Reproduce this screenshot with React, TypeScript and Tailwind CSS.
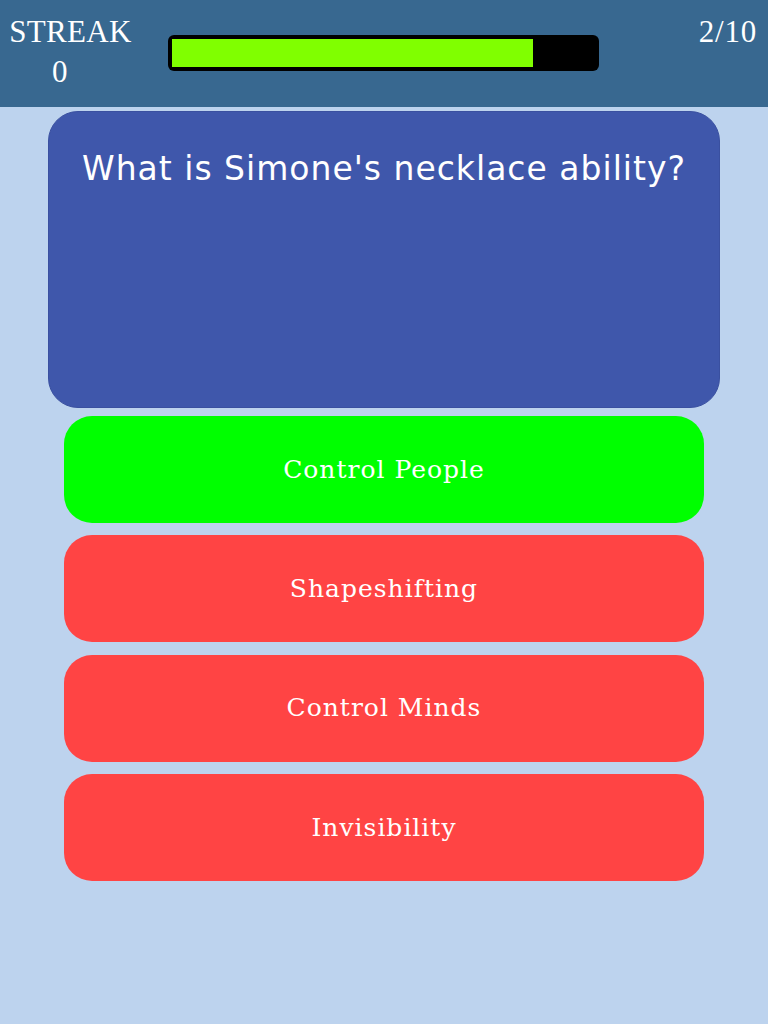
import React from "react";

const answers = [
  { text: "Control People", color: "bg-[#00ff00]" },
  { text: "Shapeshifting", color: "bg-[#ff4444]" },
  { text: "Control Minds", color: "bg-[#ff4444]" },
  { text: "Invisibility", color: "bg-[#ff4444]" },
];

export default function App() {
  return (
    <div className="w-[768px] h-[1024px] bg-[#bdd3ee] flex flex-col">
      <div className="h-[107px] bg-[#386890] flex items-start text-white" style={{ fontFamily: '"Liberation Serif", serif' }}>
        <div className="w-[141px] pt-[12px] flex flex-col items-center leading-[40px] text-[31px] tracking-[0.3px]">
          <span>STREAK</span>
          <span className="-ml-[21px]">0</span>
        </div>
        <div className="mt-[35px] ml-[27px] w-[431px] h-[36px] bg-black rounded-[6px] p-[4px] pr-[66px]">
          <div className="h-full w-full bg-[#80ff00]" />
        </div>
        <div className="flex-1 flex justify-end pr-[11px] pt-[12px] text-[31px] leading-[40px] tracking-[0.8px]">2/10</div>
      </div>
      <div className="mt-[4px] mx-[48px] h-[297px] bg-[#3f57ab] rounded-[30px] border border-[#3a50a0] flex justify-center pt-[37px]">
        <span className="text-white text-[33px] leading-[40px] tracking-[1px]" style={{ fontFamily: '"DejaVu Sans", sans-serif' }}>
          What is Simone's necklace ability?
        </span>
      </div>
      <div className="mx-[64px] mt-[8px] flex flex-col gap-[12.3px]">
        {answers.map((a) => (
          <div
            key={a.text}
            className={`${a.color} h-[107px] rounded-[28px] flex items-center justify-center text-white text-[25px] tracking-[1px]`}
            style={{ fontFamily: '"DejaVu Serif", serif' }}
          >
            {a.text}
          </div>
        ))}
      </div>
    </div>
  );
}
